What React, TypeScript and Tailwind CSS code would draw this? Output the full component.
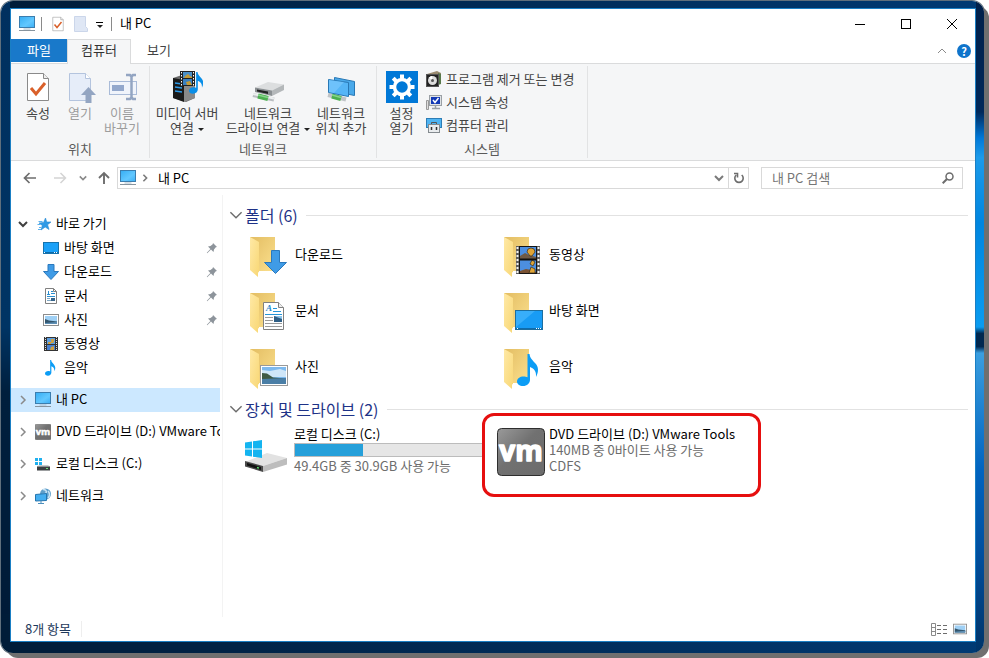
import type { ReactNode } from "react";

type IconProps = { className?: string };

function PcIcon({ className = "size-4" }: IconProps) {
  return (
    <svg viewBox="0 0 16 16" className={className} aria-hidden="true">
      <defs>
        <linearGradient id="pcScreen" x1="0" y1="0" x2="1" y2="1">
          <stop offset="0" stopColor="#35adf3" />
          <stop offset="0.6" stopColor="#62c8ff" />
          <stop offset="1" stopColor="#3aaef5" />
        </linearGradient>
      </defs>
      <rect x="0.5" y="0.5" width="15" height="11" fill="url(#pcScreen)" stroke="#3b7dae" />
      <path d="M4.5 13h7" stroke="#a9bccb" />
      <path d="M0 14.5h16" stroke="#87949e" />
    </svg>
  );
}

function CheckDocIcon({ className }: IconProps) {
  return (
    <svg viewBox="0 0 24 32" className={className} aria-hidden="true">
      <path d="M1.5 2.5h16l5 5v22h-21z" fill="#fff" stroke="#8a8a8a" />
      <path d="M17.5 2.5v5h5" fill="#eee" stroke="#8a8a8a" />
      <path d="M5 17l5 6 9-11" fill="none" stroke="#d9602a" strokeWidth="3" />
    </svg>
  );
}

function OpenIcon() {
  return (
    <svg viewBox="0 0 32 32" className="size-8" aria-hidden="true">
      <path d="M5.5 2.5h16l5 5v22h-21z" fill="#e6edf9" stroke="#b4c4de" />
      <path d="M21.5 2.5v5h5" fill="#fff" stroke="#b4c4de" />
      <path d="M24.5 16l7.5 8h-4.500v8h-6v-8h-4.500z" fill="#93a5c2" />
    </svg>
  );
}

function RenameIcon() {
  return (
    <svg viewBox="0 0 32 32" className="size-8" aria-hidden="true">
      <rect x="3.5" y="10.500" width="27" height="13" fill="#f0f4fb" stroke="#a9bbd8" />
      <rect x="6" y="14" width="12" height="6" fill="#93a8cc" />
      <path d="M20 4h4l1.500 1.500L27 4h3M25.500 5v22M20 28h4l1.500-1.500L27 28h3" fill="none" stroke="#93a5c2" strokeWidth="2.500" />
    </svg>
  );
}

function Note({ color = "#0c9df5" }: { color?: string }) {
  return (
    <path
      d="M10.500 0h2c.5 4.500 3.500 6.500 6 9.500 3 3.500 3.500 8 .5 13.500.5-5-1.500-8.500-6-10v12.500c0 4-3 6.500-7 6.500-3.500 0-6-1.800-6-4.500 0-3 3-5 6.500-5 1.500 0 3 .3 4 .8z"
      fill={color}
    />
  );
}

function MediaServerIcon() {
  return (
    <svg viewBox="0 0 32 32" className="size-8" aria-hidden="true">
      <path d="M2 7l9-3 13 3v20l-9 4-13-4z" fill="#6a6a6a" />
      <path d="M2 7l11 2v22L2 27z" fill="#1b1b1b" />
      <path d="M13 9l11-3v21l-11 4z" fill="#8a8a8a" />
      <path d="M4 12l7 1M4 16l7 1M4 20l7 1" stroke="#2f9be8" strokeWidth="1.500" />
      <rect x="9" y="0" width="15" height="15" fill="#222" />
      <rect x="12" y="1" width="9" height="6" fill="#4b90c8" />
      <rect x="12" y="8" width="9" height="6" fill="#3a7fc0" />
      <path d="M14 5l3-2 2 2 2 1v1h-8zM15 11l4-1 2 4h-5z" fill="#c59a35" />
      <path d="M10.500 1v14M22.500 1v14" stroke="#fff" strokeDasharray="1.500 1.500" />
      <g transform="translate(18 1) scale(.68)">
        <Note color="#0a8fe8" />
      </g>
    </svg>
  );
}

function NetDriveIcon() {
  return (
    <svg viewBox="0 0 32 32" className="size-8" aria-hidden="true">
      <path d="M1 24l21 4.500" stroke="#b9bdc0" strokeWidth="4" />
      <path d="M1 23l21 4.500" stroke="#eceff0" strokeWidth="2" />
      <path d="M6 25l10 2.500" stroke="#4caf50" strokeWidth="5" />
      <path d="M6 24l10 2.500" stroke="#86d58a" strokeWidth="1.500" />
      <path d="M3 16.500l13-5.500 16 2.500-12 6z" fill="#dcdedf" />
      <path d="M3 16.500l17 3V25L3 21z" fill="#8b9093" />
      <path d="M20 19.500l12-6V19l-12 6z" fill="#b4b8ba" />
      <path d="M5 18.500l11 2v2.500L5 20.500z" fill="#222" />
    </svg>
  );
}

function NetPlaceIcon() {
  return (
    <svg viewBox="0 0 32 32" className="size-8" aria-hidden="true">
      <path d="M3 24l18 4.500" stroke="#c0c4c7" strokeWidth="4" />
      <path d="M7 25l9 2.500" stroke="#4caf50" strokeWidth="5" />
      <path d="M7 24l9 2.500" stroke="#86d58a" strokeWidth="1.500" />
      <path d="M9.500 6.500l20 4v14l-20-4z" fill="#49a9ea" stroke="#2878b5" />
      <path d="M3.500 8.500l20 3v14l-20-4z" fill="#55b5f6" stroke="#2878b5" />
      <path d="M4 9l15 2-10 11-5-1z" fill="#7fcbff" opacity=".6" />
    </svg>
  );
}

function SettingsTile() {
  return (
    <svg viewBox="0 0 32 32" className="size-8" aria-hidden="true">
      <rect width="32" height="32" fill="#0078d7" />
      <circle cx="16" cy="16" r="7.500" fill="none" stroke="#fff" strokeWidth="3.500" />
      <g stroke="#fff" strokeWidth="4">
        <path d="M16 7.500V3.500M16 24.500v4M7.500 16h-4M24.500 16h4" />
        <path d="M10 10L7.200 7.200M22 22l2.800 2.800M10 22l-2.800 2.800M22 10l2.800-2.800" />
      </g>
    </svg>
  );
}

function UninstallIcon() {
  return (
    <svg viewBox="0 0 16 16" className="size-4" aria-hidden="true">
      <path d="M1 3l10-3 4 2v9l-4 1z" fill="#9a8a70" />
      <path d="M12 2l3 1v10l-3 1z" fill="#58794a" />
      <rect x="0.500" y="3.500" width="12" height="12" fill="#222" stroke="#555" />
      <circle cx="6.500" cy="9.500" r="4.500" fill="#dcdcdc" />
      <path d="M6.500 9.500L3 6.500a4.500 4.500 0 013-1.500z" fill="#fff" />
      <circle cx="6.500" cy="9.500" r="1.500" fill="#555" />
    </svg>
  );
}

function SysPropsIcon() {
  return (
    <svg viewBox="0 0 16 16" className="size-4" aria-hidden="true">
      <path d="M0.500 6.500h2v9h-2z" fill="#ddd" stroke="#999" />
      <rect x="3.500" y="1.500" width="12" height="10" fill="#dfe3e6" stroke="#9aa0a5" />
      <rect x="5" y="3" width="9" height="7" fill="#1239b5" />
      <path d="M7 6l2 2.500L12.500 4" fill="none" stroke="#fff" strokeWidth="1.500" />
      <path d="M6 14.500h8M9.500 12v2" stroke="#9aa0a5" strokeWidth="1.500" />
    </svg>
  );
}

function ManageIcon() {
  return (
    <svg viewBox="0 0 16 16" className="size-4" aria-hidden="true">
      <rect x="0.500" y="1.500" width="15" height="9" fill="#4fb4f2" stroke="#2d7db5" />
      <path d="M5.500 7.500v-2h5v2" fill="none" stroke="#555" />
      <rect x="2.500" y="7.500" width="11" height="8" fill="#e9ecee" stroke="#848a8f" />
      <path d="M5.500 10v3M10.500 10v3" stroke="#333" strokeWidth="1.500" />
    </svg>
  );
}

function StarIcon() {
  return (
    <svg viewBox="0 0 16 16" className="size-4" aria-hidden="true">
      <path d="M9.500 2l1.200 4H15l-3.400 2.700L13 13.500 9.200 11 5 14l1.300-4.600L3 7l4.600-.6z" fill="#2f9ae6" stroke="#2a8cd4" strokeWidth=".600" />
      <path d="M2.500 5.500h4M1.500 8.500h3M3 11.500h2M2 13.500h3" stroke="#5cb2ee" />
    </svg>
  );
}

function DesktopSmall() {
  return (
    <svg viewBox="0 0 16 16" className="size-4" aria-hidden="true">
      <rect x="0.500" y="2.500" width="15" height="11" fill="#1ba1f8" stroke="#1673ad" />
      <path d="M1 12.500h14" stroke="#0b6aa8" />
      <path d="M1 12.500h1M11 12.500h1M13 12.500h1" stroke="#fff" />
    </svg>
  );
}

function DownSmall() {
  return (
    <svg viewBox="0 0 16 16" className="size-4" aria-hidden="true">
      <path d="M5 .500h6v7h4.500L8 15.500.500 7.500H5z" fill="#3f9be6" stroke="#2b79bd" />
    </svg>
  );
}

function DocSmall() {
  return (
    <svg viewBox="0 0 16 16" className="size-4" aria-hidden="true">
      <path d="M2.500.500h8l3 3v12h-11z" fill="#fff" stroke="#808080" />
      <path d="M10.500.500v3h3" fill="none" stroke="#808080" />
      <path d="M4 6.500h3M5.500 3v4M8 3.500h2M8 5.500h4M4 8.500h8" stroke="#2a8fd0" />
      <path d="M4 10.500h3M4 12.500h8" stroke="#7fa7c4" />
      <rect x="8" y="10" width="4" height="3" fill="#37648a" />
    </svg>
  );
}

function PhotoSmall({ className = "size-4" }: IconProps) {
  return (
    <svg viewBox="0 0 16 16" className={className} aria-hidden="true">
      <rect x="0.500" y="2.500" width="15" height="11" fill="#fff" stroke="#8d8d8d" />
      <rect x="2" y="4" width="12" height="8" fill="#9fd0f5" />
      <path d="M2 7l4 1.500 8 1v2.500H2z" fill="#33566e" />
      <path d="M2 11l12-1v2H2z" fill="#5d8fb5" />
    </svg>
  );
}

function FilmSmall() {
  return (
    <svg viewBox="0 0 16 16" className="size-4" aria-hidden="true">
      <rect x="1" y="1" width="14" height="14" fill="#333" />
      <path d="M2.500 1v14M13.500 1v14" stroke="#ddd" strokeDasharray="1 1" />
      <rect x="4" y="2" width="8" height="6" fill="#5c9ee0" />
      <rect x="4" y="9" width="8" height="5" fill="#477fd0" />
      <path d="M8 3h3v3l-1 1H8zM5 6h3v2H5zM8 11l3-1v4H7z" fill="#d0a040" />
    </svg>
  );
}

function MusicSmall() {
  return (
    <svg viewBox="0 0 16 16" className="size-4" aria-hidden="true">
      <g transform="translate(2 0) scale(.49)">
        <Note />
      </g>
    </svg>
  );
}

function VmIcon({ className = "size-4" }: IconProps) {
  return (
    <svg viewBox="0 0 48 48" className={className} aria-hidden="true">
      <defs>
        <linearGradient id="vmBg" x1="0" y1="0" x2="1" y2="1">
          <stop offset="0" stopColor="#9a9a9a" />
          <stop offset="0.45" stopColor="#717171" />
          <stop offset="1" stopColor="#6c6c6c" />
        </linearGradient>
      </defs>
      <rect x="0.500" y="0.500" width="47" height="47" rx="4" fill="url(#vmBg)" stroke="#2e2e2e" />
      <text
        x="24"
        y="33"
        textAnchor="middle"
        fill="#fff"
        stroke="#fff"
        strokeWidth="1.500"
        strokeLinejoin="round"
        className="font-['Open_Sans',sans-serif] text-[28px] font-bold"
      >
        vm
      </text>
    </svg>
  );
}

function WinLogo() {
  return <path d="M0 2.500L7 1.500v7H0zM8 1.300L17 0v8.500H8zM0 9.500h7v7l-7-1zM8 9.500h9V18l-9-1.300z" fill="#14b4f0" />;
}

function DiskSmall() {
  return (
    <svg viewBox="0 0 16 16" className="size-4" aria-hidden="true">
      <path d="M0 2h3v3H0zM4 2h3v3H4zM0 6h3v3H0zM4 6h3v3H4z" fill="#1fb0ef" />
      <path d="M2 10l3-1h8l2 1.500H2z" fill="#c9cccd" />
      <rect x="2" y="10.500" width="13" height="4" fill="#3b3f42" />
      <path d="M11 12.500h2" stroke="#6ee07a" />
    </svg>
  );
}

function NetworkSmall() {
  return (
    <svg viewBox="0 0 16 16" className="size-4" aria-hidden="true">
      <circle cx="10.500" cy="6" r="5.500" fill="#5f9fca" />
      <path d="M8 1.500c3 0 4 2 3 3.500s-4 1-5 2M13 3c2 2 2 5 0 7" fill="none" stroke="#c8e3f4" strokeWidth="1.500" />
      <path d="M.500 6.500l11-1v7l-11 .500z" fill="#44aef0" stroke="#2575ae" />
      <path d="M3 15.500h6M6 13v2" stroke="#4d8fbd" />
    </svg>
  );
}

function DriveIcon() {
  return (
    <svg viewBox="0 0 48 48" className="size-12" aria-hidden="true">
      <path d="M2 34l22-9 20 5-24 8z" fill="#e2e2e2" />
      <path d="M2 33l18 5v6L2 38.500z" fill="#4a4a4a" />
      <path d="M20 38l24-8v6.500L20 44z" fill="#bdbdbd" />
      <path d="M4 35l14 4v3L4 37.500z" fill="#111" />
      <path d="M14 39.500l2 .600" stroke="#5fe070" strokeWidth="1.500" />
      <g transform="translate(2 12)">
        <WinLogo />
      </g>
    </svg>
  );
}

function Folder({ children }: { children: ReactNode }) {
  return (
    <svg viewBox="0 0 48 48" className="size-12 shrink-0" aria-hidden="true">
      <defs>
        <linearGradient id="folderBack" x1="0" y1="0" x2="1" y2="1">
          <stop offset="0" stopColor="#e3bd62" />
          <stop offset="1" stopColor="#fbe08e" />
        </linearGradient>
        <linearGradient id="folderFront" x1="0" y1="0" x2="1" y2="1">
          <stop offset="0" stopColor="#ffe9a6" />
          <stop offset="1" stopColor="#f8d775" />
        </linearGradient>
      </defs>
      <path d="M5 5h25v34H14z" fill="url(#folderBack)" />
      <path d="M5 5l9 5v30l-1 .500V45L5 38z" fill="url(#folderFront)" />
      {children}
    </svg>
  );
}

function PinIcon() {
  return (
    <svg viewBox="0 0 12 12" className="size-3" aria-hidden="true">
      <path d="M7 1l4 4-1.200.300L8 7.500 7.500 10 5 7.600 1.200 11.200.800 10.800 4.400 7 2 4.500 4.500 4 6.700 2.200z" fill="#8d949b" />
    </svg>
  );
}

function Chevron({ dir, className }: { dir: "right" | "down" | "up"; className: string }) {
  const points = { right: "3,1 7,5 3,9", down: "1,3 5,7 9,3", up: "1,7 5,3 9,7" };
  return (
    <svg viewBox="0 0 10 10" className={className} aria-hidden="true">
      <polyline points={points[dir]} fill="none" stroke="currentColor" strokeWidth="inherit" />
    </svg>
  );
}

function Caret({ className = "" }: IconProps) {
  return (
    <svg viewBox="0 0 6 3" className={`h-[3px] w-1.5 ${className}`} aria-hidden="true">
      <path d="M0 0h6L3 3z" fill="#222" />
    </svg>
  );
}

const folders = [
  {
    name: "다운로드",
    art: <path d="M26.500 18.500h8v12h7L30.500 41.500 19.500 30.500h7z" fill="#3f9be6" stroke="#2b79bd" />,
  },
  {
    name: "동영상",
    art: (
      <>
        <rect x="17" y="14" width="24" height="28" fill="#5c5c5c" />
        <path d="M18.500 15v27M39.500 15v27" stroke="#f4f4f4" strokeWidth="2" strokeDasharray="2 2" />
        <rect x="20.500" y="14.500" width="17" height="27" fill="#4c8fe0" stroke="#151515" />
        <path d="M21 24l5-3 4 2 4 1 3 1v2H21z" fill="#6f5a45" />
        <path d="M21 39l6-2 5 1 5 2v1H21z" fill="#7a5233" />
        <path d="M32 16a4 4 0 014 4l-3 4h-2l-3-4a4 4 0 014-4zM33 28l3 2-2 4-3-2zM32 35l4 2v4h-6z" fill="#e0a536" stroke="#332a1c" strokeWidth=".700" />
        <path d="M21 27.500h16" stroke="#111" strokeWidth="2" />
      </>
    ),
  },
  {
    name: "문서",
    art: (
      <>
        <path d="M18.500 14.500h15l5 5v22h-20z" fill="#fff" stroke="#808080" />
        <path d="M33.500 14.500v5h5" fill="#eee" stroke="#808080" />
        <text x="21" y="23" fill="#1f86c8" className="font-['Liberation_Serif',serif] text-[9px] font-bold italic">
          A
        </text>
        <path d="M28 20.500h4M28 23.500h8M20 26.500h17" stroke="#2495d8" />
        <path d="M20 29.500h8M20 32.500h8M20 35.500h17M20 38.500h17" stroke="#9b9b9b" />
        <rect x="29" y="28" width="8" height="6" fill="#2f5f86" />
        <path d="M29 28h8v3z" fill="#8cc4ea" />
      </>
    ),
  },
  {
    name: "바탕 화면",
    art: (
      <>
        <rect x="16.500" y="22.500" width="27" height="19" fill="#189cf5" stroke="#1d6e9f" />
        <path d="M17 23h19L17 39z" fill="#38aefa" />
        <path d="M17 40.500h26" stroke="#0e6cad" />
        <path d="M18 40.500h1M37 40.500h1M39 40.500h1M41 40.500h1" stroke="#fff" />
      </>
    ),
  },
  {
    name: "사진",
    art: (
      <>
        <rect x="15.500" y="21.500" width="27" height="20" fill="#fff" stroke="#999" />
        <rect x="17" y="23" width="24" height="17" fill="#7db9ee" />
        <path d="M17 26l8 1 10-2 6 2v6H17z" fill="#cfe6f8" />
        <path d="M17 29l5 .500 6 4 13 1v1H17z" fill="#3f5a45" />
        <path d="M17 35l24-1v6H17z" fill="#4a7ea6" />
      </>
    ),
  },
  {
    name: "음악",
    art: (
      <g transform="translate(18 10)">
        <Note />
      </g>
    ),
  },
];

const quickAccess = [
  { name: "바탕 화면", icon: <DesktopSmall />, pinned: true },
  { name: "다운로드", icon: <DownSmall />, pinned: true },
  { name: "문서", icon: <DocSmall />, pinned: true },
  { name: "사진", icon: <PhotoSmall />, pinned: true },
  { name: "동영상", icon: <FilmSmall />, pinned: false },
  { name: "음악", icon: <MusicSmall />, pinned: false },
];

const roots = [
  { name: "내 PC", icon: <PcIcon />, selected: true },
  { name: "DVD 드라이브 (D:) VMware Tools", icon: <VmIcon />, selected: false },
  { name: "로컬 디스크 (C:)", icon: <DiskSmall />, selected: false },
  { name: "네트워크", icon: <NetworkSmall />, selected: false },
];

function TitleBar() {
  return (
    <header className="flex h-[30px] items-center pl-2">
      <PcIcon />
      <span className="mr-2 ml-1.5 h-3.5 w-px bg-[#8a8a8a]" />
      <button aria-label="속성" className="ml-0.5">
        <CheckDocIcon className="h-4 w-3" />
      </button>
      <button aria-label="새 폴더" className="ml-2.5">
        <svg viewBox="0 0 14 16" className="h-4 w-3.5" aria-hidden="true">
          <path d="M.500.500h11v10l2 2v3H.500z" fill="#dfe7f5" stroke="#cbd6ea" />
        </svg>
      </button>
      <button aria-label="빠른 실행 도구 모음 사용자 지정" className="ml-2 flex flex-col items-center gap-0.5 pt-0.5">
        <span className="h-px w-[7px] bg-black" />
        <Caret />
      </button>
      <span className="mx-2 h-3.5 w-px bg-[#8a8a8a]" />
      <h1 className="pb-0.5 text-black">내 PC</h1>
      <div className="ml-auto flex self-stretch">
        <button aria-label="최소화" className="flex w-[46px] items-center justify-center">
          <span className="h-px w-2.5 bg-black" />
        </button>
        <button aria-label="최대화" className="flex w-[46px] items-center justify-center">
          <span className="size-2.5 border border-black" />
        </button>
        <button aria-label="닫기" className="flex w-[46px] items-center justify-center">
          <svg viewBox="0 0 10 10" className="size-2.5" aria-hidden="true">
            <path d="M0 0l10 10M10 0L0 10" stroke="#000" />
          </svg>
        </button>
      </div>
    </header>
  );
}

function Tabs() {
  return (
    <nav className="flex h-[25px] border-b border-[#dadbdc]">
      <button className="mb-px w-14 bg-[#1979ca] pb-px text-white">파일</button>
      <button className="-mb-px w-16 border-x border-t border-[#dadbdc] bg-[#f5f6f7] pb-1 text-[#333]">컴퓨터</button>
      <button className="w-14 pb-0.5 text-[#444]">보기</button>
      <div className="ml-auto flex items-center gap-2.5 pr-1">
        <button aria-label="리본 최소화">
          <Chevron dir="up" className="size-2.5 stroke-1 text-[#8a8a8a]" />
        </button>
        <button
          aria-label="도움말"
          className="size-3.5 rounded-full bg-[#0f74cb] text-center text-[11px] leading-3.5 font-bold text-white"
        >
          ?
        </button>
      </div>
    </nav>
  );
}

type BigButtonProps = { icon: ReactNode; lines: string[]; width: string; disabled?: boolean; menu?: boolean };

function BigButton({ icon, lines, width, disabled, menu }: BigButtonProps) {
  return (
    <button
      disabled={disabled}
      className={`flex flex-col items-center ${width} ${disabled ? "text-[#9d9d9d]" : "text-[#444]"}`}
    >
      {icon}
      <span className="mt-0.5 leading-[15px] whitespace-nowrap">
        {lines[0]}
        {lines[1] && (
          <>
            <br />
            {lines[1]}
          </>
        )}
        {menu && <Caret className="ml-1 inline-block align-middle" />}
      </span>
    </button>
  );
}

function RibbonGroup({ label, className, children }: { label: string; className: string; children: ReactNode }) {
  return (
    <section aria-label={label} className={`my-0.5 flex flex-col border-r border-[#e2e3e4] pt-[5px] ${className}`}>
      <div className="flex h-[70px] items-start">{children}</div>
      <h2 className="text-center leading-4 text-[#5a5a5a]">{label}</h2>
    </section>
  );
}

function Ribbon() {
  return (
    <div className="flex h-[97px] border-b border-[#dadbdc] bg-[#f5f6f7]">
      <RibbonGroup label="위치" className="w-[139px] px-1.5">
        <BigButton icon={<CheckDocIcon className="h-8 w-6" />} lines={["속성"]} width="w-[42px]" />
        <BigButton icon={<OpenIcon />} lines={["열기"]} width="w-[42px]" disabled />
        <BigButton icon={<RenameIcon />} lines={["이름", "바꾸기"]} width="w-[42px]" disabled />
      </RibbonGroup>
      <RibbonGroup label="네트워크" className="w-[227px]">
        <BigButton icon={<MediaServerIcon />} lines={["미디어 서버", "연결"]} width="w-[74px]" menu />
        <BigButton icon={<NetDriveIcon />} lines={["네트워크", "드라이브 연결"]} width="w-[88px]" menu />
        <BigButton icon={<NetPlaceIcon />} lines={["네트워크", "위치 추가"]} width="w-[58px]" />
      </RibbonGroup>
      <RibbonGroup label="시스템" className="w-[211px]">
        <BigButton icon={<SettingsTile />} lines={["설정", "열기"]} width="w-[49px]" />
        <ul className="-mt-1 text-[#444]">
          <li>
            <button className="flex h-[23px] items-center gap-1 whitespace-nowrap">
              <UninstallIcon />
              프로그램 제거 또는 변경
            </button>
          </li>
          <li>
            <button className="flex h-[23px] items-center gap-1">
              <SysPropsIcon />
              시스템 속성
            </button>
          </li>
          <li>
            <button className="flex h-[23px] items-center gap-1">
              <ManageIcon />
              컴퓨터 관리
            </button>
          </li>
        </ul>
      </RibbonGroup>
    </div>
  );
}

function AddressRow() {
  return (
    <div className="flex items-center py-1.5 pr-3">
      <div className="flex w-[106px] items-center pl-3 text-[#6d6d6d]">
        <button aria-label="뒤로">
          <svg viewBox="0 0 14 12" className="h-3 w-3.5" aria-hidden="true">
            <path d="M13 6H1.500M6.500 1l-5 5 5 5" fill="none" stroke="currentColor" strokeWidth="1.700" />
          </svg>
        </button>
        <button aria-label="앞으로" disabled className="ml-4 text-[#d4d4d4]">
          <svg viewBox="0 0 14 12" className="h-3 w-3.5" aria-hidden="true">
            <path d="M1 6h11.500M7.500 1l5 5-5 5" fill="none" stroke="currentColor" strokeWidth="1.500" />
          </svg>
        </button>
        <button aria-label="최근 위치" className="ml-3 text-[#8a8a8a]">
          <Chevron dir="down" className="size-2 stroke-2" />
        </button>
        <button aria-label="위로" className="ml-[11px]">
          <svg viewBox="0 0 12 14" className="h-3.5 w-3" aria-hidden="true">
            <path d="M6 13V2M1 7l5-5 5 5" fill="none" stroke="currentColor" strokeWidth="1.900" />
          </svg>
        </button>
      </div>
      <div className="flex h-[22px] min-w-0 flex-1 items-center border border-[#d9d9d9] pl-0.5">
        <PcIcon />
        <Chevron dir="right" className="ml-[5px] size-2 stroke-2 text-[#7a7a7a]" />
        <button className="ml-[9px] text-black">내 PC</button>
        <button aria-label="이전 위치" className="mr-1 ml-auto text-[#7a7a7a]">
          <Chevron dir="down" className="size-2.5 stroke-2" />
        </button>
        <button
          aria-label="새로 고침"
          className="flex w-5 items-center justify-center self-stretch border-l border-[#d9d9d9] text-[#6d6d6d]"
        >
          <svg viewBox="0 0 12 12" className="size-3" aria-hidden="true">
            <path d="M3.300 3A4.200 4.200 0 108.700 3" fill="none" stroke="currentColor" strokeWidth="1.600" />
            <path d="M1 1.500h3.500v4" fill="none" stroke="currentColor" strokeWidth="1.600" />
          </svg>
        </button>
      </div>
      <div className="ml-3 flex h-[22px] w-[202px] items-center border border-[#d9d9d9] pr-2 pl-2.5">
        <input
          type="text"
          aria-label="내 PC 검색"
          placeholder="내 PC 검색"
          className="min-w-0 flex-1 leading-5 outline-none placeholder:text-[#767676]"
        />
        <svg viewBox="0 0 12 12" className="size-3 text-[#6d6d6d]" aria-hidden="true">
          <circle cx="7.500" cy="4.500" r="3.500" fill="none" stroke="currentColor" strokeWidth="1.500" />
          <path d="M5 7L.700 11.300" stroke="currentColor" strokeWidth="2" />
        </svg>
      </div>
    </div>
  );
}

function Sidebar() {
  return (
    <aside className="w-[212px] shrink-0 border-r border-[#f3f3f3] pt-[17px] pr-0.5 whitespace-nowrap text-black">
      <div className="flex h-6 items-center pl-[7px]">
        <Chevron dir="down" className="size-2.5 stroke-2 text-[#404040]" />
        <span className="ml-2">
          <StarIcon />
        </span>
        <a href="#quick" className="ml-1 pb-0.5">
          바로 가기
        </a>
      </div>
      <ul className="mb-2">
        {quickAccess.map((item) => (
          <li key={item.name} className="flex h-6 items-center pr-0.5 pl-8">
            {item.icon}
            <a href="#quick" className="ml-[5px] flex-1 pb-0.5">
              {item.name}
            </a>
            {item.pinned && <PinIcon />}
          </li>
        ))}
      </ul>
      <ul className="flex flex-col gap-2">
        {roots.map((item) => (
          <li
            key={item.name}
            className={`flex h-6 items-center overflow-hidden pl-[7px] ${item.selected ? "bg-[#cce8ff]" : ""}`}
          >
            <Chevron dir="right" className="size-2.5 shrink-0 stroke-[1.5] text-[#8a8a8a]" />
            <span className="ml-[7px] shrink-0">{item.icon}</span>
            <a href="#root" className="ml-[5px] pb-0.5">
              {item.name}
            </a>
          </li>
        ))}
      </ul>
    </aside>
  );
}

function GroupHeader({ title }: { title: string }) {
  return (
    <div className="flex h-5 items-center gap-0.5 pl-1.5">
      <Chevron dir="down" className="size-3.5 stroke-1 text-[#6d6d6d]" />
      <h2 className="text-base leading-5 text-[#1e3287]">{title}</h2>
      <span className="ml-1.5 h-px flex-1 bg-[#e2e2e2]" />
    </div>
  );
}

function Content() {
  return (
    <main className="min-w-0 flex-1 pt-2.5 pr-[7px]">
      <GroupHeader title="폴더 (6)" />
      <ul className="mt-[3px] grid grid-cols-[repeat(auto-fill,254px)] pl-[22px]">
        {folders.map((folder) => (
          <li key={folder.name} className="flex h-14 gap-0.5 pt-1">
            <Folder>{folder.art}</Folder>
            <a href="#folder" className="mt-3 self-start leading-5 text-black">
              {folder.name}
            </a>
          </li>
        ))}
      </ul>
      <div className="mt-[3px]">
        <GroupHeader title="장치 및 드라이브 (2)" />
      </div>
      <ul className="mt-[7px] grid grid-cols-[repeat(auto-fill,254px)] pl-5 leading-4 text-[#6d6d6d]">
        <li className="flex gap-[3px]">
          <span className="pt-0.5">
            <DriveIcon />
          </span>
          <div className="flex-1">
            <a href="#c" className="block text-black">
              로컬 디스크 (C:)
            </a>
            <div className="my-px h-3.5 border border-[#bcbcbc] bg-[#e6e6e6]">
              <div className="h-full bg-[#26a0da]" style={{ width: `${((49.4 - 30.9) / 49.4) * 91}%` }} />
            </div>
            <p>49.4GB 중 30.9GB 사용 가능</p>
          </div>
        </li>
        <li className="relative flex gap-1">
          <span className="absolute -top-[13px] -right-2.5 -bottom-[21px] -left-[15px] rounded-xl border-3 border-[#e60f0f] bg-white" />
          <span className="relative pt-0.5">
            <VmIcon className="size-12" />
          </span>
          <div className="relative">
            <a href="#d" className="block text-black">
              DVD 드라이브 (D:) VMware Tools
            </a>
            <p>140MB 중 0바이트 사용 가능</p>
            <p>CDFS</p>
          </div>
        </li>
      </ul>
    </main>
  );
}

function StatusBar() {
  return (
    <footer className="flex h-6 items-center pr-2 pl-3.5 text-[#1e395b]">
      <span className="border-r border-[#eee] pr-2.5 leading-4">8개 항목</span>
      <div className="ml-auto flex items-center gap-1.5">
        <button aria-label="자세히">
          <svg viewBox="0 0 16 13" className="h-[13px] w-4" aria-hidden="true">
            <path d="M.500.500h4v12h-4zM.500 4.500h4M.500 8.500h4" fill="none" stroke="#8a8a8a" />
            <path d="M6 2.500h4M12 2.500h4M6 6.500h4M12 6.500h4M6 10.500h4M12 10.500h4" stroke="#6d6d6d" />
          </svg>
        </button>
        <button aria-label="큰 아이콘">
          <PhotoSmall className="size-3.5" />
        </button>
      </div>
    </footer>
  );
}

export default function App() {
  return (
    <div className="flex min-h-screen bg-white pt-px pr-[5px] pb-[5px] pl-px font-['Noto_Sans_CJK_KR',sans-serif] text-[13px]">
      <div className="flex flex-1 rounded-xl pt-[7px] pr-2 pb-[11px] pl-[9px] shadow-[5px_5px_0_#6f6f6f,0_0_0_1px_#5f6f7c] [background:linear-gradient(#00204a_0%,#00285a_17%,#0078d8_21%,#1c9bea_24%,#0086e0_34%,#0a9cf0_50%,#002850_51%,#002850_53%,#3a9ee0_54%,#0064c0_72%,#004f9e_85%,#003468_100%)_right/8px_100%_no-repeat,linear-gradient(#00305f_0%,#003464_50%,#001f3d_60%,#001b38_94%,transparent_94%)_left/9px_100%_no-repeat,linear-gradient(90deg,#001c38,#003a74)]">
        <div className="flex min-w-0 flex-1 flex-col border border-[#1a7fc4] bg-white">
          <TitleBar />
          <Tabs />
          <Ribbon />
          <AddressRow />
          <div className="flex flex-1">
            <Sidebar />
            <Content />
          </div>
          <StatusBar />
        </div>
      </div>
    </div>
  );
}
